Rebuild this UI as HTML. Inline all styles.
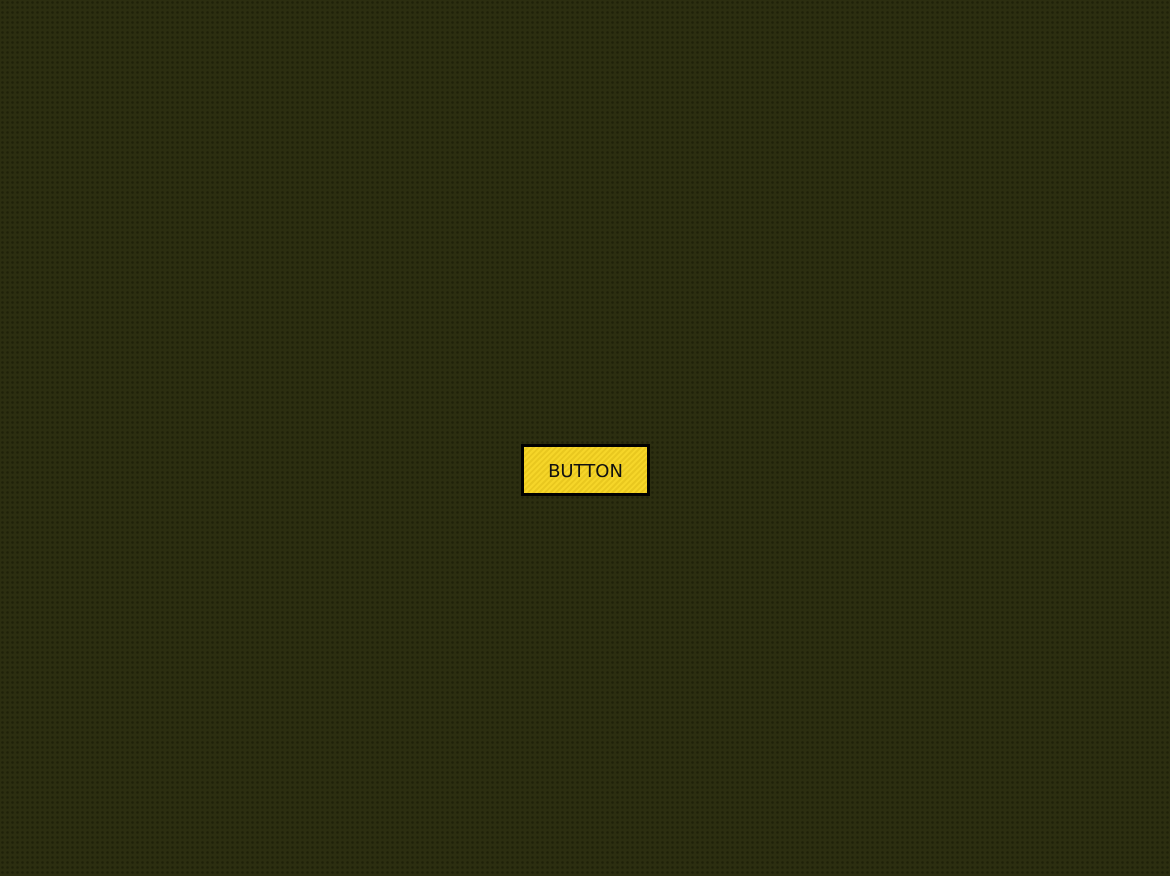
<!DOCTYPE html>
<html><head><style>
html,body{margin:0;width:1170px;height:876px;overflow:hidden}
body{background-color:#2c2e10;background-image:radial-gradient(circle,#1f210a 1px,transparent 1.6px);background-size:5px 5px;position:relative}
.b{position:absolute;left:521px;top:444px;width:123px;height:46px;border:3px solid #000;background:repeating-linear-gradient(135deg,#f6d629 0 2px,#e9c81f 2px 4px);font-family:"DejaVu Sans","Liberation Sans",sans-serif;font-size:18px;color:#111;text-align:center;line-height:50px;letter-spacing:0px}
</style></head><body><div class="b">BUTTON</div></body></html>
